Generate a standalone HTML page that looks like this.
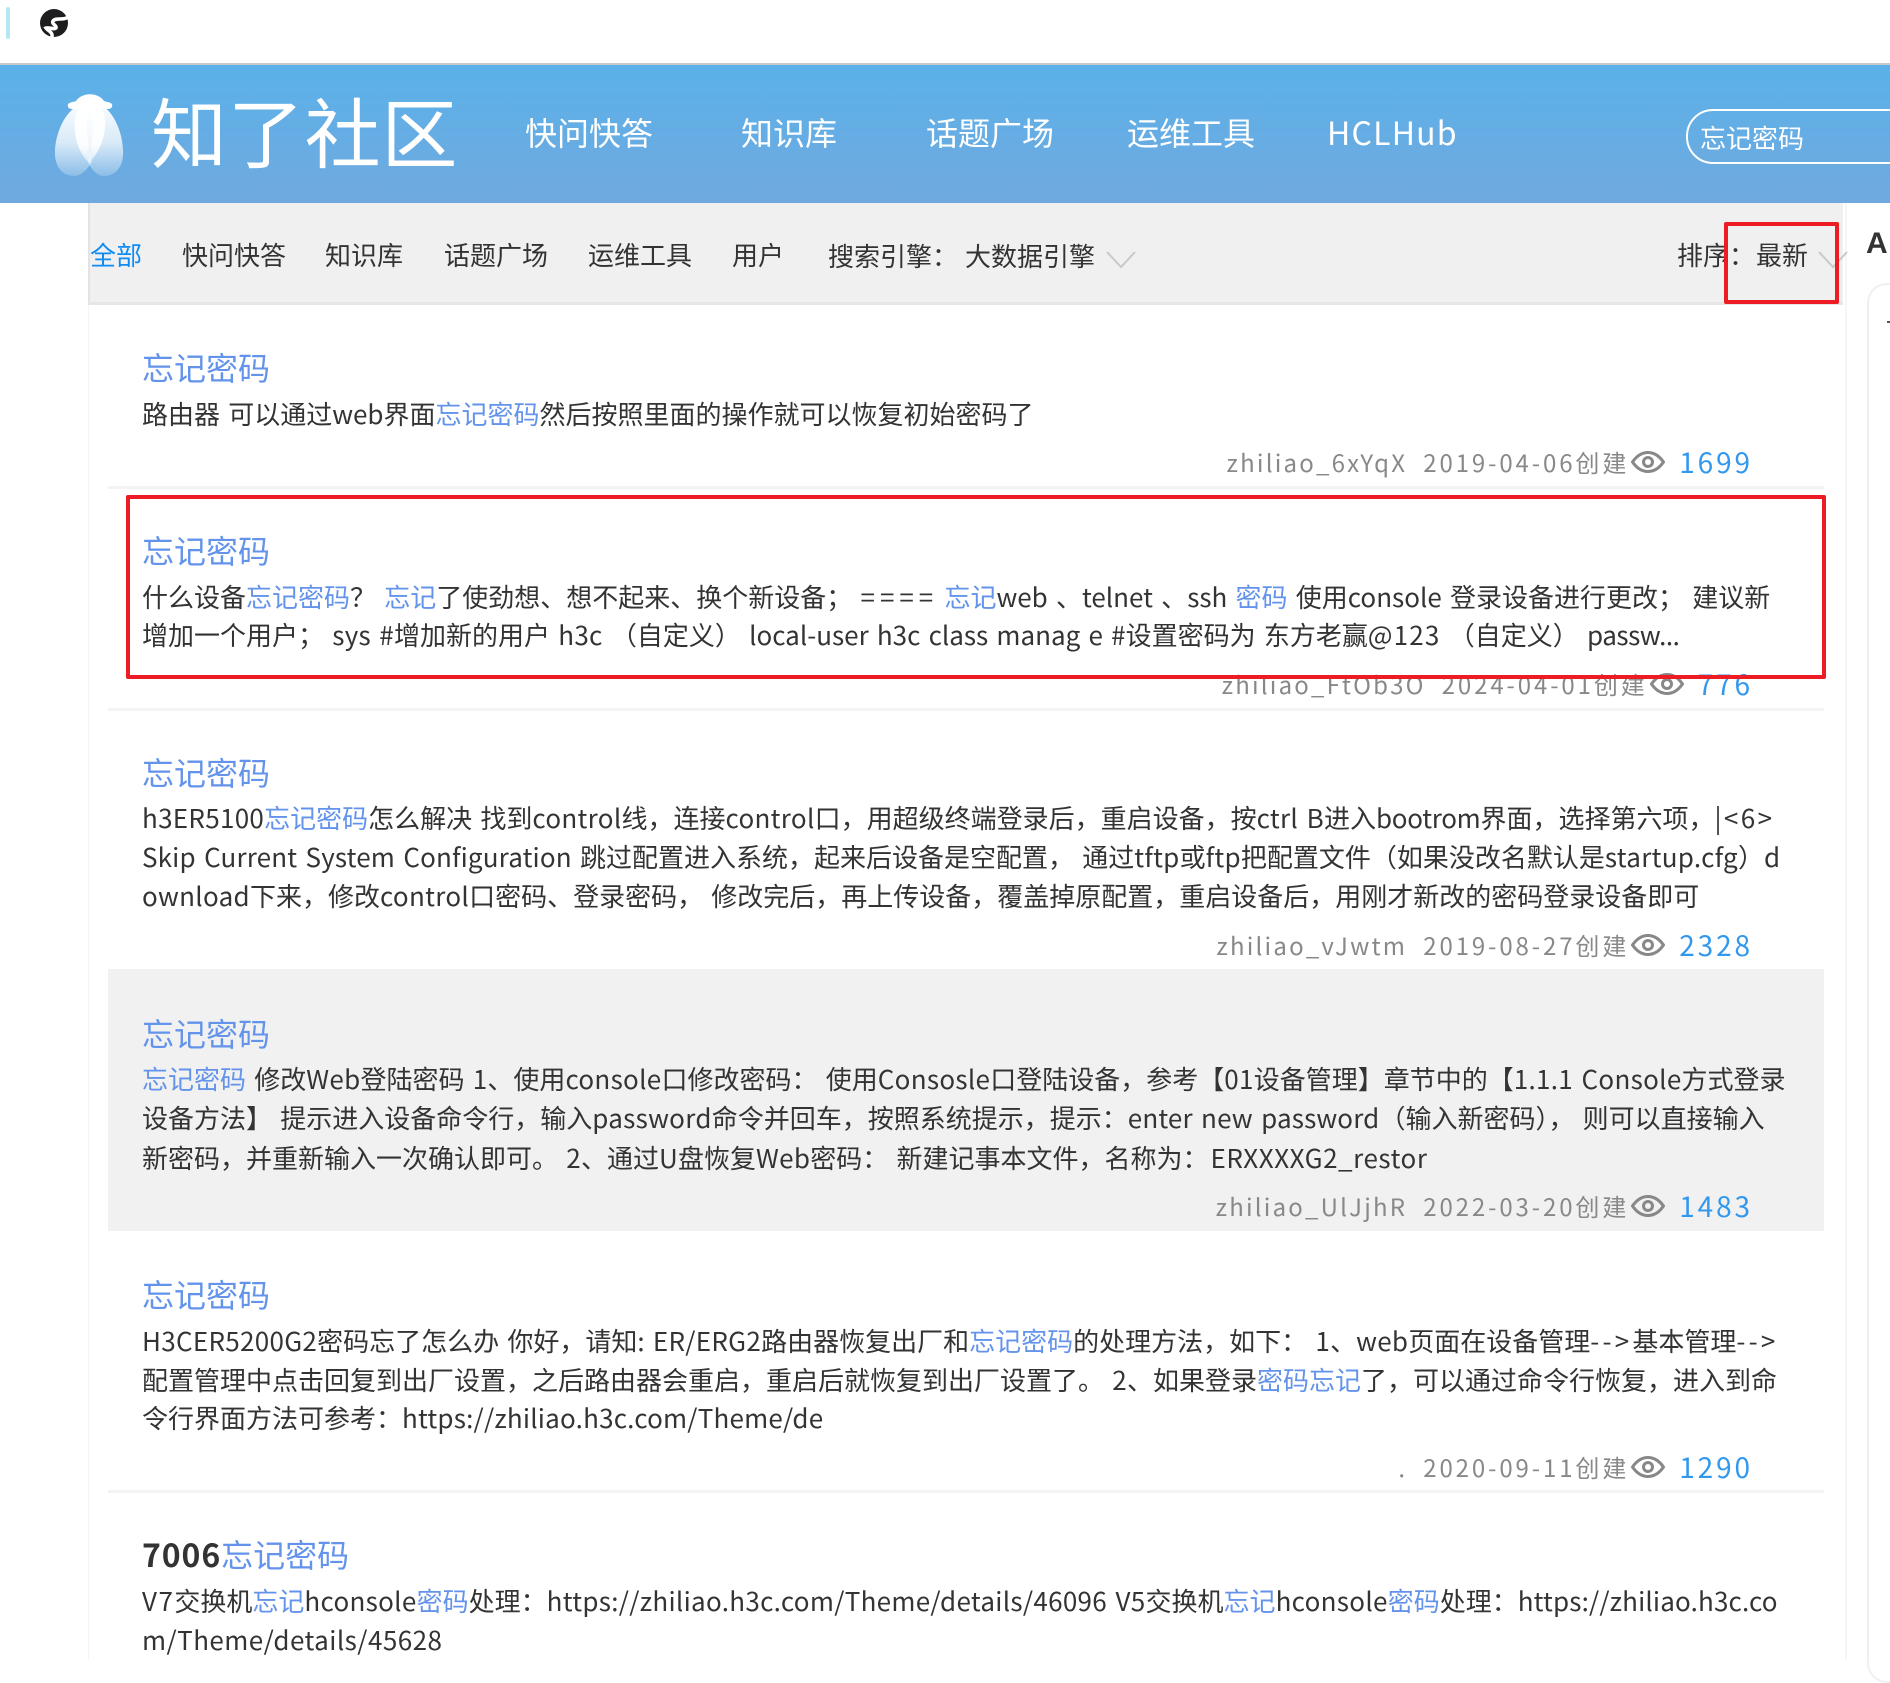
<!DOCTYPE html>
<html lang="zh-CN">
<head>
<meta charset="utf-8">
<title>知了社区</title>
<style>
html,body{margin:0;padding:0;background:#fff}
body{width:1890px;height:1660px;position:relative;overflow:hidden;font-family:"Noto Sans CJK SC","Liberation Sans",sans-serif;color:#333}
.a{position:absolute;white-space:pre}
a,.k{color:#6393ea;text-decoration:none}
.h{background:linear-gradient(#5ab1e9,#70a9df);left:0;top:65px;width:1890px;height:138px}
.n{color:#fff;font-size:32px;line-height:44px;top:110px}
.f{font-size:26px;line-height:36px;top:237px;color:#333}
.t{left:142px;font-size:32px;line-height:44px;color:#6393ea}
.l{left:142px;font-size:26px;line-height:39px;color:#333;word-spacing:2.4px}
u{text-decoration:none;letter-spacing:.3px}
u.z{letter-spacing:0}
u.w{letter-spacing:2.4px}
u.e{letter-spacing:5px;margin-right:-2px}
.sep{left:108px;width:1716px;height:3px;background:#f3f3f3}
.m{right:140px;height:36px;display:flex;align-items:center;color:#888;font-size:24px;letter-spacing:2.2px;line-height:36px}
.m span{letter-spacing:2.9px}
.m b{font-weight:400;color:#3298ee;font-size:28px;letter-spacing:2.9px;margin-left:14px;margin-right:-3px}
.m svg{margin:0 0 0 2px;flex:none}
.m i{font-style:normal;margin-right:16px}
.r{border:4px solid #ed1c24;border-radius:2px;box-sizing:border-box}
</style>
</head>
<body>
<div class="a" style="left:6px;top:7px;width:4px;height:32px;background:#b5e8f5;border-radius:2px"></div>
<svg class="a" style="left:39px;top:8px" width="30" height="30" viewBox="0 0 30 30"><circle cx="15" cy="15" r="14" fill="#1e1e20"/><path d="M29 9C24 13 17 9 14 13 12 16 18 17 17 20 15 22 10 19 7 20 9 23 14 24 13 29" fill="none" stroke="#fff" stroke-width="3.5"/></svg>
<div class="a" style="left:0;top:63px;width:1890px;height:2px;background:#c8c8c8"></div>
<div class="a h"></div>
<svg class="a" style="left:50px;top:88px" width="80" height="92" viewBox="0 0 80 92">
<defs>
<linearGradient id="w" x1="0" y1="0" x2="0" y2="1"><stop offset="0" stop-color="#fff" stop-opacity=".98"/><stop offset=".55" stop-color="#fff" stop-opacity=".75"/><stop offset="1" stop-color="#fff" stop-opacity=".22"/></linearGradient>
<linearGradient id="c" x1="0" y1="0" x2="0" y2="1"><stop offset="0" stop-color="#fff"/><stop offset=".7" stop-color="#fff" stop-opacity=".9"/><stop offset="1" stop-color="#fff" stop-opacity=".45"/></linearGradient>
</defs>
<path d="M40 14C20 14 6 40 5 62 4 78 12 88 24 88 32 88 38 80 42 74 38 60 34 30 40 14Z" fill="url(#w)"/>
<path d="M40 14C60 14 72 40 73 62 74 78 66 88 54 88 46 88 41 80 38 74 42 60 46 30 40 14Z" fill="url(#w)"/>
<path d="M26 26C28 16 52 16 54 26 58 40 52 62 39 75 26 62 22 40 26 26Z" fill="url(#c)"/>
<path d="M18 16C20 14 24 14 26 13 32 4 48 4 54 13 56 14 60 14 62 16 63 19 61 21 58 21L22 21C19 21 17 19 18 16Z" fill="#fff"/>
</svg>
<div class="a" style="left:151px;top:75px;font-size:76px;line-height:108px;color:#fff;letter-spacing:.8px">知了社区</div>
<div class="a n" style="left:525px">快问快答</div>
<div class="a n" style="left:741px">知识库</div>
<div class="a n" style="left:926px">话题广场</div>
<div class="a n" style="left:1127px">运维工具</div>
<div class="a n" style="left:1327px;letter-spacing:1.2px">HCLHub</div>
<div class="a" style="left:1686px;top:109px;width:260px;height:55px;box-sizing:border-box;border:2px solid #fff;border-radius:27px"></div>
<div class="a" style="left:1700px;top:120px;font-size:26px;line-height:36px;color:#fff">忘记密码</div>

<div class="a" style="left:88px;top:203px;width:1px;height:1457px;background:#f4f4f4"></div>
<div class="a" style="left:1845px;top:203px;width:2px;height:1457px;background:#f6f6f8"></div>
<div class="a" style="left:88px;top:203px;width:1755px;height:99px;background:#f0f0f0;border-left:2px solid #e3e3e3;box-sizing:border-box"></div>
<div class="a" style="left:88px;top:302px;width:1755px;height:3px;background:#e6e6e6"></div>
<div class="a f" style="left:90px;color:#0f8cf2">全部</div>
<div class="a f" style="left:182px">快问快答</div>
<div class="a f" style="left:325px">知识库</div>
<div class="a f" style="left:444px">话题广场</div>
<div class="a f" style="left:588px">运维工具</div>
<div class="a f" style="left:732px">用户</div>
<div class="a f" style="left:828px;top:238px">搜索引擎：</div>
<div class="a f" style="left:965px;top:238px">大数据引擎</div>
<svg class="a" style="left:1106px;top:250px" width="30" height="19" fill="none" stroke="#c9c9c9" stroke-width="2"><path d="M1 2 15 17 29 2"/></svg>
<div class="a f" style="left:1677px;top:237px">排序：</div>
<div class="a f" style="left:1756px;top:237px">最新</div>
<svg class="a" style="left:1818px;top:250px" width="30" height="19" fill="none" stroke="#c9c9c9" stroke-width="2"><path d="M1 2 15 17 29 2"/></svg>

<div class="a" style="left:1866px;top:224px;font-size:30px;line-height:40px;font-weight:700;color:#333;font-family:'Liberation Sans',sans-serif">A</div>
<div class="a" style="left:1867px;top:283px;width:60px;height:1400px;border:2px solid #efeff5;border-radius:20px;box-sizing:border-box"></div>
<div class="a" style="left:1887px;top:321px;width:3px;height:2px;background:#555"></div>

<!-- item 1 -->
<div class="a t" style="top:345px">忘记密码</div>
<div class="a l" style="top:394px">路由器 可以通过<u class="z">web</u>界面<a>忘记密码</a>然后按照里面的操作就可以恢复初始密码了</div>
<div class="a m" style="top:444px"><i>zhiliao_6xYqX</i><span>2019-04-06创建</span><svg width="34" height="22" viewBox="0 0 34 22" fill="none" stroke="#888" stroke-width="3"><path d="M1.5 11C6 4.5 11 1.5 17 1.5S28 4.500 32.500 11C28 17.500 23 20.500 17 20.500S6 17.500 1.500 11Z"/><circle cx="17" cy="11" r="4.500"/></svg><b>1699</b></div>
<div class="a sep" style="top:486px"></div>

<!-- item 2 -->
<div class="a t" style="top:528px">忘记密码</div>
<div class="a l" style="top:577px">什么设备<a>忘记密码</a>？ <a>忘记</a>了使劲想、想不起来、换个新设备； <u class="e">====</u> <a>忘记</a><u class="z">web</u> 、<u class="z">telnet</u> 、<u class="z">ssh</u> <a>密码</a> 使用<u class="z">console</u> 登录设备进行更改； 建议新</div>
<div class="a l" style="top:615px">增加一个用户； <u>sys</u> <u>#</u>增加新的用户 <u>h3c</u> （自定义） <u class="z">local-user h3c class manag e #</u>设置密码为 东方老赢<u style="letter-spacing:1.2px">@123</u> （自定义） <u style="letter-spacing:-.45px">passw...</u></div>
<div class="a m" style="top:666px"><i>zhiliao_FtOb3O</i><span>2024-04-01创建</span><svg width="34" height="22" viewBox="0 0 34 22" fill="none" stroke="#888" stroke-width="3"><path d="M1.5 11C6 4.5 11 1.5 17 1.5S28 4.500 32.500 11C28 17.500 23 20.500 17 20.500S6 17.500 1.500 11Z"/><circle cx="17" cy="11" r="4.500"/></svg><b>776</b></div>
<div class="a sep" style="top:708px"></div>

<!-- item 3 -->
<div class="a t" style="top:750px">忘记密码</div>
<div class="a l" style="top:798px"><u>h3ER5100</u><a>忘记密码</a>怎么解决 找到<u>control</u>线，连接<u>control</u>口，用超级终端登录后，重启设备，按<u>ctrl B</u>进入<u style="letter-spacing:-.3px">bootrom</u>界面，选择第六项，<u class="w">|&lt;6&gt;</u></div>
<div class="a l" style="top:837px"><u style="letter-spacing:.15px">Skip Current System Configuration</u> 跳过配置进入系统，起来后设备是空配置， 通过<u>tftp</u>或<u>ftp</u>把配置文件（如果没改名默认是<u>startup.cfg</u>）<u>d</u></div>
<div class="a l" style="top:876px"><u>ownload</u>下来，修改<u>control</u>口密码、登录密码， 修改完后，再上传设备，覆盖掉原配置，重启设备后，用刚才新改的密码登录设备即可</div>
<div class="a m" style="top:927px"><i>zhiliao_vJwtm</i><span>2019-08-27创建</span><svg width="34" height="22" viewBox="0 0 34 22" fill="none" stroke="#888" stroke-width="3"><path d="M1.5 11C6 4.5 11 1.5 17 1.5S28 4.500 32.500 11C28 17.500 23 20.500 17 20.500S6 17.500 1.500 11Z"/><circle cx="17" cy="11" r="4.500"/></svg><b>2328</b></div>

<!-- item 4 -->
<div class="a" style="left:108px;top:969px;width:1716px;height:262px;background:#f1f1f1"></div>
<div class="a t" style="top:1011px">忘记密码</div>
<div class="a l" style="top:1059px"><a>忘记密码</a> 修改<u>Web</u>登陆密码 <u>1</u>、使用<u>console</u>口修改密码： 使用<u>Consosle</u>口登陆设备，参考【<u>01</u>设备管理】章节中的【<u>1.1.1 Console</u>方式登录</div>
<div class="a l" style="top:1098px">设备方法】 提示进入设备命令行，输入<u>password</u>命令并回车，按照系统提示，提示：<u style="letter-spacing:.15px">enter new password</u>（输入新密码）， 则可以直接输入</div>
<div class="a l" style="top:1138px">新密码，并重新输入一次确认即可。 <u>2</u>、通过<u>U</u>盘恢复<u>Web</u>密码： 新建记事本文件，名称为：<u style="letter-spacing:.55px;margin-left:2px">ERXXXXG2_restor</u></div>
<div class="a m" style="top:1188px"><i>zhiliao_UlJjhR</i><span>2022-03-20创建</span><svg width="34" height="22" viewBox="0 0 34 22" fill="none" stroke="#888" stroke-width="3"><path d="M1.5 11C6 4.5 11 1.5 17 1.5S28 4.500 32.500 11C28 17.500 23 20.500 17 20.500S6 17.500 1.500 11Z"/><circle cx="17" cy="11" r="4.500"/></svg><b>1483</b></div>

<!-- item 5 -->
<div class="a t" style="top:1272px">忘记密码</div>
<div class="a l" style="top:1321px"><u>H3CER5200G2</u>密码忘了怎么办 你好，请知: <u>ER/ERG2</u>路由器恢复出厂和<a>忘记密码</a>的处理方法，如下： <u>1</u>、<u>web</u>页面在设备管理<u style="letter-spacing:3.2px">--&gt;</u>基本管理<u style="letter-spacing:3.2px">--&gt;</u></div>
<div class="a l" style="top:1360px">配置管理中点击回复到出厂设置，之后路由器会重启，重启后就恢复到出厂设置了。 <u>2</u>、如果登录<a>密码忘记</a>了，可以通过命令行恢复，进入到命</div>
<div class="a l" style="top:1398px">令行界面方法可参考：<u style="letter-spacing:.2px">https://zhiliao.h3c.com/Theme/de</u></div>
<div class="a m" style="top:1449px"><i>.</i><span>2020-09-11创建</span><svg width="34" height="22" viewBox="0 0 34 22" fill="none" stroke="#888" stroke-width="3"><path d="M1.5 11C6 4.5 11 1.5 17 1.5S28 4.500 32.500 11C28 17.500 23 20.500 17 20.500S6 17.500 1.500 11Z"/><circle cx="17" cy="11" r="4.500"/></svg><b>1290</b></div>
<div class="a sep" style="top:1490px"></div>

<!-- item 6 -->
<div class="a t" style="top:1532px"><span style="font-weight:700;color:#333;letter-spacing:.9px">7006</span>忘记密码</div>
<div class="a l" style="top:1581px"><u style="letter-spacing:1.5px">V7</u>交换机<a>忘记</a><u>hconsole</u><a>密码</a>处理：<u>https://zhiliao.h3c.com/Theme/details/46096 V5</u>交换机<a>忘记</a><u>hconsole</u><a>密码</a>处理：<u style="letter-spacing:.15px">https://zhiliao.h3c.co</u></div>
<div class="a l" style="top:1620px"><u style="letter-spacing:.45px">m/Theme/details/45628</u></div>

<!-- annotations -->
<div class="a r" style="left:126px;top:495px;width:1700px;height:184px"></div>
<div class="a r" style="left:1724px;top:222px;width:115px;height:82px"></div>
</body>
</html>
